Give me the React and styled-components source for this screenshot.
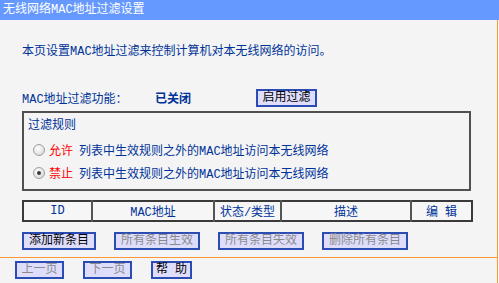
import React from "react";
import styled, { createGlobalStyle } from "styled-components";

const GlobalStyle = createGlobalStyle`
  html, body {
    margin: 0;
    padding: 0;
    background: #f4f4f4;
  }
  body {
    font-family: "Liberation Mono", "Noto Sans CJK SC", monospace;
    font-size: 12px;
  }
`;

const Page = styled.div`
  width: 499px;
`;

const TitleBar = styled.div`
  height: 20px;
  line-height: 20px;
  padding-left: 3px;
  background: #6699ff;
  color: #fff;
`;

const Panel = styled.div`
  width: 498px;
  box-sizing: border-box;
  border-right: 1px solid #ff9933;
`;

const Content = styled.div`
  padding: 24px 0 0 22px;
  color: #003399;
`;

const Intro = styled.div`
  line-height: 16px;
  height: 16px;
`;

const StatusRow = styled.div`
  margin-top: 29px;
  height: 18px;
  display: grid;
  grid-template-columns: 133px 101px auto;
  align-items: center;
`;

const StatusValue = styled.span`
  font-weight: bold;
`;

const FieldBox = styled.div`
  margin-top: 4px;
  width: 449px;
  height: 80px;
  box-sizing: border-box;
  border: 2px solid #505050;
  padding: 5px 0 0 4px;
`;

const BoxTitle = styled.div`
  line-height: 16px;
`;

const RadioRow = styled.label`
  height: 23px;
  display: flex;
  align-items: center;
  padding-left: 5px;
  &:first-of-type {
    margin-top: 4px;
  }
`;

const Radio = styled.span`
  width: 10px;
  height: 10px;
  border-radius: 50%;
  border: 1px solid #a0a0a0;
  background: radial-gradient(circle at 40% 35%, #ffffff 0%, #e6e6e6 55%, #cfcfcf 100%);
  display: flex;
  align-items: center;
  justify-content: center;
  margin-right: 4px;
  &::after {
    content: "";
    width: 4px;
    height: 4px;
    border-radius: 50%;
    background: ${(p) => (p.$checked ? "#3a3a3a" : "transparent")};
  }
`;

const Mode = styled.span`
  color: #ff0000;
  margin-right: 6px;
`;

const RuleTable = styled.table`
  margin-top: 9px;
  width: 449px;
  border-collapse: collapse;
  border: 2px solid #3a3a3a;
  table-layout: fixed;
`;

const Th = styled.th`
  height: 17px;
  padding: 0;
  font-weight: normal;
  color: #003399;
  text-align: center;
  border-left: 2px solid #555;
  background: #f6f6f6;
  &:first-child {
    border-left: none;
  }
`;

const ButtonRow = styled.div`
  margin-top: 10px;
  display: flex;
  gap: 18px;
  height: 18px;
`;

const Button = styled.button`
  width: ${(p) => p.$w}px;
  height: 18px;
  padding: 0;
  box-sizing: border-box;
  border: 2px solid #2b4cb3;
  background: #dedefc;
  color: ${(p) => (p.disabled ? "#8a8a8a" : "#000")};
  font: inherit;
  line-height: 14px;
  white-space: pre;
`;

const Divider = styled.div`
  margin-top: 7px;
  height: 1px;
  background: #ff9933;
`;

const Footer = styled.div`
  padding: 3px 0 4px 15px;
  display: flex;
  gap: 19px;
  border-bottom: 1px solid #ff9933;
`;

const columns = [
  { label: "ID", w: 69 },
  { label: "MAC地址", w: 122 },
  { label: "状态/类型", w: 67 },
  { label: "描述", w: 130 },
  { label: "编 辑", w: 61 },
];

export default function App() {
  return (
    <Page>
      <GlobalStyle />
      <TitleBar>无线网络MAC地址过滤设置</TitleBar>
      <Panel>
        <Content>
          <Intro>本页设置MAC地址过滤来控制计算机对本无线网络的访问。</Intro>
          <StatusRow>
            <span>MAC地址过滤功能：</span>
            <StatusValue>已关闭</StatusValue>
            <Button $w={61}>启用过滤</Button>
          </StatusRow>
          <FieldBox>
            <BoxTitle>过滤规则</BoxTitle>
            <RadioRow>
              <Radio />
              <Mode>允许</Mode>
              列表中生效规则之外的MAC地址访问本无线网络
            </RadioRow>
            <RadioRow>
              <Radio $checked />
              <Mode>禁止</Mode>
              列表中生效规则之外的MAC地址访问本无线网络
            </RadioRow>
          </FieldBox>
          <RuleTable>
            <colgroup>
              {columns.map((c) => (
                <col key={c.label} style={{ width: c.w }} />
              ))}
            </colgroup>
            <thead>
              <tr>
                {columns.map((c) => (
                  <Th key={c.label}>{c.label}</Th>
                ))}
              </tr>
            </thead>
          </RuleTable>
          <ButtonRow>
            <Button $w={74}>添加新条目</Button>
            <Button $w={86} disabled>所有条目生效</Button>
            <Button $w={86} disabled>所有条目失效</Button>
            <Button $w={86} disabled>删除所有条目</Button>
          </ButtonRow>
        </Content>
        <Divider />
        <Footer>
          <Button $w={49} disabled>上一页</Button>
          <Button $w={49} disabled>下一页</Button>
          <Button $w={41}>帮 助</Button>
        </Footer>
      </Panel>
    </Page>
  );
}
